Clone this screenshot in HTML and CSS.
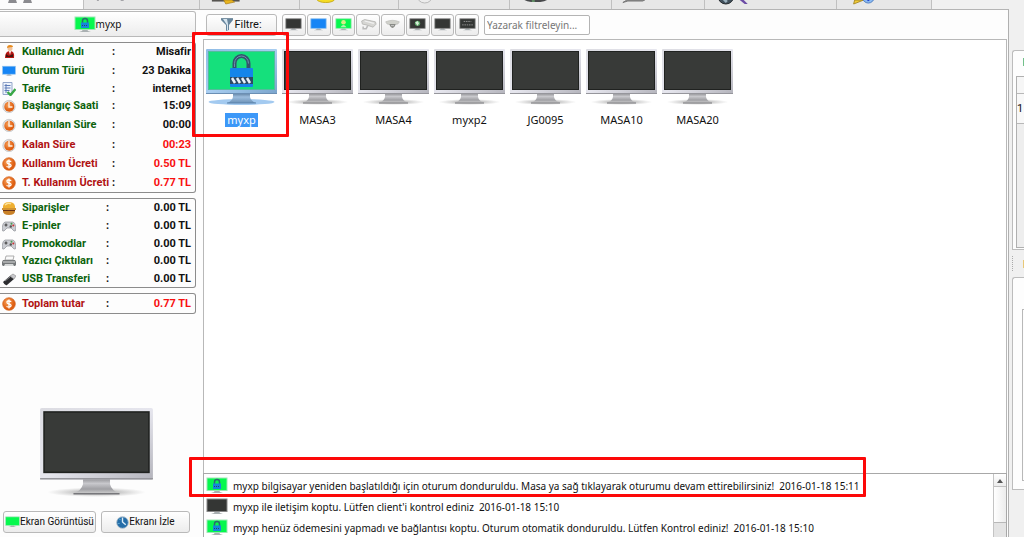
FILE: index.html
```html
<!DOCTYPE html>
<html lang="tr">
<head>
<meta charset="utf-8">
<title>Masalar</title>
<link rel="stylesheet" href="styles.css">
</head>
<body>
<svg class="defs" aria-hidden="true">
  <defs>
    <linearGradient id="frame" x1="0" y1="0" x2="1" y2="1"><stop offset="0" stop-color="#dcdce2"/><stop offset=".5" stop-color="#e6e6ee"/><stop offset="1" stop-color="#b4b4bc"/></linearGradient>
    <linearGradient id="frameSel" x1="0" y1="0" x2="1" y2="1"><stop offset="0" stop-color="#8fbce6"/><stop offset=".5" stop-color="#a8cdf0"/><stop offset="1" stop-color="#7aa4cc"/></linearGradient>
    <linearGradient id="stand" x1="0" y1="0" x2="0" y2="1"><stop offset="0" stop-color="#8c8c90"/><stop offset=".35" stop-color="#c8c8cc"/><stop offset=".7" stop-color="#a0a0a4"/><stop offset="1" stop-color="#d0d0d0"/></linearGradient>
    <linearGradient id="standSel" x1="0" y1="0" x2="0" y2="1"><stop offset="0" stop-color="#5c7d9e"/><stop offset=".4" stop-color="#9dbddd"/><stop offset="1" stop-color="#6c92b8"/></linearGradient>
    <radialGradient id="shade"><stop offset="0" stop-color="#777" stop-opacity=".8"/><stop offset="1" stop-color="#999" stop-opacity="0"/></radialGradient>
    <radialGradient id="orange" cx=".4" cy=".35"><stop offset="0" stop-color="#f9a45c"/><stop offset="1" stop-color="#df5f12"/></radialGradient>
    <symbol id="monitor" viewBox="0 0 71 56">
      <ellipse cx="35.500" cy="53" rx="31" ry="3" fill="url(#shade)"/>
      <path d="M27 44h17v4q1 4 6 6H21q5-2 6-6z" fill="url(#stand)"/>
      <path d="M21 54h29" stroke="#77777b"/>
      <rect width="71" height="45" rx="1" fill="url(#frame)"/>
      <path d="M0 44.500h71" stroke="#96969c"/>
      <rect x="2.500" y="2.500" width="66" height="38" fill="#383a38" stroke="#202220"/>
    </symbol>
    <symbol id="monitor-locked" viewBox="0 0 71 56">
      <ellipse cx="35.500" cy="53" rx="33" ry="3" fill="#a3caf0"/>
      <path d="M27 44h17v4q1 4 6 6H21q5-2 6-6z" fill="url(#standSel)"/>
      <path d="M21 54h29" stroke="#5a82ac"/>
      <rect width="71" height="45" rx="1" fill="url(#frameSel)"/>
      <path d="M0 44.500h71" stroke="#6b8fb4"/>
      <rect x="2.500" y="2.500" width="66" height="38" fill="#15e07c" stroke="#52bd9c"/>
      <path d="M28.500 20v-5.500a7 7.500 0 0 1 14 0V20" fill="none" stroke="#34536e" stroke-width="4"/>
      <path d="M28.500 18v-3.500a7 7.500 0 0 1 14 0" fill="none" stroke="#6d90ad"/>
      <rect x="24" y="19" width="23" height="19" rx="1" fill="#1485ea"/>
      <rect x="24" y="28" width="23" height="7" fill="#2c4a66"/>
      <path d="M26 29l3 5M31 29l3 5M36 29l3 5M41 29l3 5" stroke="#e8f0f8" stroke-width="2.500"/>
    </symbol>
    <symbol id="mini-foot" viewBox="0 0 22 17"><path d="M9 13h4l1 2 3 1H5l3-1z" fill="#aab0b2"/></symbol>
    <symbol id="mini-dark" viewBox="0 0 22 17"><use href="#mini-foot"/><rect x="1" y="1" width="20" height="12.500" fill="#343634" stroke="#888"/></symbol>
    <symbol id="mini-blue" viewBox="0 0 22 17"><use href="#mini-foot"/><rect x="1" y="1" width="20" height="12.500" fill="#1685f5" stroke="#8ec0ee"/></symbol>
    <symbol id="mini-green" viewBox="0 0 22 17"><use href="#mini-foot"/><rect x="1" y="1" width="20" height="12.500" fill="#06f84e" stroke="#9be8b4"/></symbol>
    <symbol id="mini-lock" viewBox="0 0 22 17"><use href="#mini-green"/><path d="M8.500 7V5a2.500 2.500 0 0 1 5 0v2" fill="none" stroke="#2c6a70" stroke-width="1.500"/><rect x="7" y="6.500" width="8" height="5.500" fill="#1685dd"/><path d="M8 9.500h6" stroke="#24496a" stroke-dasharray="1 1"/></symbol>
    <symbol id="mini-user" viewBox="0 0 22 17"><use href="#mini-green"/><circle cx="11" cy="5.500" r="3" fill="#d6ee86"/><path d="M7 12q4-6 8 0z" fill="#b8f0b0"/></symbol>
    <symbol id="mini-globe" viewBox="0 0 22 17"><use href="#mini-dark"/><circle cx="11" cy="7" r="3.500" fill="#5ca667"/><path d="M8 6l3-2 2 3-2 3z" fill="#d7efd9"/></symbol>
    <symbol id="mini-text" viewBox="0 0 22 17"><use href="#mini-dark"/><path d="M6 4.500h10M4 9h14" stroke="#aaa" stroke-dasharray="2 1"/></symbol>
    <symbol id="camera" viewBox="0 0 22 17"><path d="M2 4l4-2 14 3 1 3-4 4-9-3-5-1z" fill="#d6d6d3" stroke="#b0b0ae"/><path d="M6 4l12 3" stroke="#f2f2f2" stroke-width="1.500"/><path d="M10 10l-2 4H4v-3" fill="none" stroke="#bbb" stroke-width="2"/></symbol>
    <symbol id="dome" viewBox="0 0 22 17"><path d="M2 5q9-4 18 0l-2 3q-7 2-14 0z" fill="#d0d1cb" stroke="#b2b2ae" stroke-width=".7"/><path d="M7 8h8q-1 5-4 5t-4-5z" fill="#898b86"/><path d="M9 10h4" stroke="#ddd"/></symbol>
    <symbol id="funnel" viewBox="0 0 12 13"><path d="M0 0h12v2L8 7v5l-3 1V7L0 2z" fill="#67859c"/><path d="M2 1h4l1 5v6l-1 .5V7z" fill="#d6e5ef"/><path d="M0 .5h12" stroke="#7c93a4"/></symbol>
    <symbol id="person" viewBox="0 0 14 14"><circle cx="8" cy="3.500" r="2.500" fill="#f2c49c"/><path d="M5 3q0-3 3-3t3 2q-3 0-6 1z" fill="#e78b1c"/><path d="M3 13q0-7 5-7t4 7z" fill="#b61612"/><path d="M7 6h2l-1 4z" fill="#fff"/><path d="M4 9l3 2 4-2v3H4z" fill="#44150f"/></symbol>
    <symbol id="sheet" viewBox="0 0 14 14"><path d="M1 .5h9v12H1z" fill="#eef3fb" stroke="#92a5c9"/><path d="M2.500 3.500h6M2.500 6h6M2.500 8.500h5M4 2v9" stroke="#5f7db8"/><path d="M5.500 10l3 3 5-6" fill="none" stroke="#39a847" stroke-width="2.400"/></symbol>
    <symbol id="clock" viewBox="0 0 14 14"><circle cx="7" cy="7.500" r="6.200" fill="#e2e2e2" stroke="#bbb" stroke-width=".6"/><circle cx="7.300" cy="7.800" r="5" fill="url(#orange)"/><path d="M7 3v5h3.500" fill="none" stroke="#fff0e0" stroke-width="1.400"/></symbol>
    <symbol id="coin" viewBox="0 0 14 14"><circle cx="7" cy="7" r="6.300" fill="url(#orange)" stroke="#d2631f" stroke-width=".7"/><path d="M9.300 4.500Q4.500 3 5 5.500q0 1 2 1.500 2.500.7 2 2-.7 1.800-4.500.5M7 2.500v9" fill="none" stroke="#fff" stroke-width="1.300"/></symbol>
    <symbol id="burger" viewBox="0 0 14 14"><path d="M1 8q-1-7 6-7t6 7z" fill="#efb031"/><path d="M3 4q3-3 6-1" stroke="#fbe19a" fill="none" stroke-width="1.500"/><path d="M0 7h14v2H0z" fill="#d29332"/><path d="M1 9h12v1.500H1z" fill="#642f17"/><path d="M1 10h12q0 4-6 4t-6-4z" fill="#c98127"/></symbol>
    <symbol id="gamepad" viewBox="0 0 14 14"><path d="M3 3h8q2 0 3 6 0 4-2 3l-3-3H5l-3 3q-2 1-2-3 1-6 3-6z" fill="#cbcdd2" stroke="#8e9096" stroke-width=".7"/><path d="M2.500 6h3M4 4.500v3" stroke="#444" stroke-width="1.200"/><circle cx="9.500" cy="4.800" r="1" fill="#4b9c50"/><circle cx="11.300" cy="6.500" r="1" fill="#c33"/><circle cx="8.800" cy="7.500" r="1.200" fill="#555"/></symbol>
    <symbol id="printer" viewBox="0 0 14 14"><path d="M4 2h8l-1 4H3z" fill="#fafafa" stroke="#999" stroke-width=".8"/><path d="M1 6h12l1 2v3l-1 1H1l-1-1V8z" fill="#75787a"/><path d="M1 8h12" stroke="#dadada"/><path d="M3 10h8l1 2H2z" fill="#d8dada"/></symbol>
    <symbol id="usb" viewBox="0 0 14 14"><path d="M1 10l7-6 4 3-7 6q-2 1-4-3z" fill="#2c2d30"/><path d="M8 4l3-2 3 2-2 3z" fill="#c8c8cc" stroke="#888" stroke-width=".6"/><path d="M3 9l5-4" stroke="#88898c"/></symbol>
    <symbol id="watch" viewBox="0 0 14 14"><circle cx="7" cy="7" r="6.300" fill="#246da8" stroke="#b1c1cc"/><path d="M7 1.500v5l3.500 3" fill="none" stroke="#d9ecf8" stroke-width="1.500"/><path d="M3 3l2 1M2 8h2" stroke="#67afd8"/></symbol>
  </defs>
</svg>

<div class="app">
  <div class="main">
    <nav class="tabs" aria-label="Bölümler">
      <button class="tab active" aria-label="Masalar"><svg viewBox="0 0 83 9"><path d="M9 0h7l1 3H8zM24 0h7l1 3h-9z" fill="#8b8b8f"/></svg></button>
      <button class="tab" aria-label="Kafeterya"><svg viewBox="0 0 116 9"><path d="M13 0h2M37 0h3" stroke="#a4a4a8" stroke-width="2"/></svg></button>
      <button class="tab" aria-label="Üyeler"><svg viewBox="0 0 100 9"><path d="M12 0h28v1.500H12z" fill="#4f4d49"/><path d="M24 0h8l3 2-9 2z" fill="#e9b51e" stroke="#a87e19" stroke-width=".7"/></svg></button>
      <button class="tab" aria-label="Kasa"><svg viewBox="0 0 99 9"><ellipse cx="26" cy="-1" rx="9" ry="3.500" fill="#f5dc23" stroke="#c9ae1d"/></svg></button>
      <button class="tab" aria-label="Süre"><svg viewBox="0 0 111 9"><circle cx="26" cy="-5" r="8" fill="#ececec" stroke="#b8b8b8"/></svg></button>
      <button class="tab" aria-label="Tarifeler"><svg viewBox="0 0 102 9"><ellipse cx="26" cy="-1" rx="12" ry="3" fill="#47494b"/><path d="M22 1h3" stroke="#7cd080"/></svg></button>
      <button class="tab" aria-label="Raporlar"><svg viewBox="0 0 93 9"><path d="M11 2.500l4-2.500h18l-2 1H16z" fill="#999" stroke="#777"/></svg></button>
      <button class="tab" aria-label="Arama"><svg viewBox="0 0 132 9"><circle cx="21" cy="-4" r="8" fill="#41505c" stroke="#24292d"/><path d="M18 0l3-1 2 2-2 2z" fill="#9ab0bd"/><path d="M35 0h4l4 4h-3z" fill="#6b4ba5"/></svg></button>
      <button class="tab" aria-label="Ayarlar"><svg viewBox="0 0 96 9"><path d="M18 0h9l-10 4z" fill="#f3cc35" stroke="#a98c2a"/><circle cx="32" cy="-3" r="6" fill="#8abaf2" stroke="#517fc0"/><path d="M32-1v2" stroke="#2240d0" stroke-width="2"/></svg></button>
    </nav>

    <div class="work">
      <aside class="side">
        <button class="client"><svg class="mini"><use href="#mini-lock"/></svg>myxp</button>

        <div class="box"><table class="info session">
          <tr><td><svg><use href="#person"/></svg></td><th>Kullanıcı Adı</th><td>:</td><td>Misafir</td></tr>
          <tr><td><svg><use href="#mini-blue"/></svg></td><th>Oturum Türü</th><td>:</td><td>23 Dakika</td></tr>
          <tr><td><svg><use href="#sheet"/></svg></td><th>Tarife</th><td>:</td><td>internet</td></tr>
          <tr><td><svg><use href="#clock"/></svg></td><th>Başlangıç Saati</th><td>:</td><td>15:09</td></tr>
          <tr><td><svg><use href="#clock"/></svg></td><th>Kullanılan Süre</th><td>:</td><td>00:00</td></tr>
          <tr class="due"><td><svg><use href="#clock"/></svg></td><th>Kalan Süre</th><td>:</td><td>00:23</td></tr>
          <tr class="due"><td><svg><use href="#coin"/></svg></td><th>Kullanım Ücreti</th><td>:</td><td>0.50 TL</td></tr>
          <tr class="due"><td><svg><use href="#coin"/></svg></td><th>T. Kullanım Ücreti</th><td>:</td><td>0.77 TL</td></tr>
        </table></div>

        <div class="box"><table class="info extras">
          <tr><td><svg><use href="#burger"/></svg></td><th>Siparişler</th><td>:</td><td>0.00 TL</td></tr>
          <tr><td><svg><use href="#gamepad"/></svg></td><th>E-pinler</th><td>:</td><td>0.00 TL</td></tr>
          <tr><td><svg><use href="#gamepad"/></svg></td><th>Promokodlar</th><td>:</td><td>0.00 TL</td></tr>
          <tr><td><svg><use href="#printer"/></svg></td><th>Yazıcı Çıktıları</th><td>:</td><td>0.00 TL</td></tr>
          <tr><td><svg><use href="#usb"/></svg></td><th>USB Transferi</th><td>:</td><td>0.00 TL</td></tr>
        </table></div>

        <div class="box"><table class="info extras total">
          <tr class="due"><td><svg><use href="#coin"/></svg></td><th>Toplam tutar</th><td>:</td><td>0.77 TL</td></tr>
        </table></div>

        <svg class="preview"><use href="#monitor"/></svg>
        <div class="actions">
          <button><svg class="mini"><use href="#mini-green"/></svg>Ekran Görüntüsü</button>
          <button><svg class="round"><use href="#watch"/></svg>Ekranı İzle</button>
        </div>
      </aside>

      <main class="content">
        <div class="toolbar">
          <button class="filter"><svg><use href="#funnel"/></svg>Filtre:</button>
          <div class="states">
            <button aria-label="Kapalı"><svg><use href="#mini-dark"/></svg></button>
            <button aria-label="Açık"><svg><use href="#mini-blue"/></svg></button>
            <button aria-label="Üye"><svg><use href="#mini-user"/></svg></button>
            <button aria-label="Kamera"><svg><use href="#camera"/></svg></button>
            <button aria-label="Dome kamera"><svg><use href="#dome"/></svg></button>
            <button aria-label="İnternet"><svg><use href="#mini-globe"/></svg></button>
            <button aria-label="Boş"><svg><use href="#mini-dark"/></svg></button>
            <button aria-label="Mesaj"><svg><use href="#mini-text"/></svg></button>
          </div>
          <input type="text" aria-label="Filtre metni" placeholder="Yazarak filtreleyin...">
        </div>

        <div class="desks">
          <button class="desk selected"><svg><use href="#monitor-locked"/></svg><span>myxp</span></button>
          <button class="desk"><svg><use href="#monitor"/></svg><span>MASA3</span></button>
          <button class="desk"><svg><use href="#monitor"/></svg><span>MASA4</span></button>
          <button class="desk"><svg><use href="#monitor"/></svg><span>myxp2</span></button>
          <button class="desk"><svg><use href="#monitor"/></svg><span>JG0095</span></button>
          <button class="desk"><svg><use href="#monitor"/></svg><span>MASA10</span></button>
          <button class="desk"><svg><use href="#monitor"/></svg><span>MASA20</span></button>
        </div>

        <div class="log">
          <ul>
            <li><svg class="mini"><use href="#mini-lock"/></svg><span>myxp bilgisayar yeniden başlatıldığı için oturum donduruldu. Masa ya sağ tıklayarak oturumu devam ettirebilirsiniz!</span><time>2016-01-18 15:11</time></li>
            <li><svg class="mini"><use href="#mini-dark"/></svg><span>myxp ile iletişim koptu. Lütfen client'i kontrol ediniz</span><time class="near">2016-01-18 15:10</time></li>
            <li><svg class="mini"><use href="#mini-lock"/></svg><span>myxp henüz ödemesini yapmadı ve bağlantısı koptu. Oturum otomatik donduruldu. Lütfen Kontrol ediniz!</span><time>2016-01-18 15:10</time></li>
          </ul>
          <div class="scroll"><button aria-label="Yukarı"><svg viewBox="0 0 8 5"><path d="M1 5l3-4 3 4z" fill="#555"/></svg></button><div class="thumb"></div></div>
        </div>
      </main>
    </div>
  </div>

  <aside class="dock">
    <section class="panel list"><i class="mark green"></i><div class="rows"><div class="head"></div><div class="line">1</div></div></section>
    <div class="grip"><i class="dots"></i><i class="mark yellow"></i></div>
    <section class="panel detail"><div class="inner"></div></section>
  </aside>

  <div class="callout desk-callout"></div>
  <div class="callout log-callout"></div>
</div>
</body>
</html>
```
FILE: styles.css
```css
* { box-sizing: border-box; }
body { margin: 0; background: #f0f0f0; color: #111; font: 11px/14px Roboto, sans-serif; }
button, input { font: inherit; color: inherit; margin: 0; padding: 0; }
button { border: 1px solid #b9b9b9; border-radius: 3px; background: linear-gradient(#fff, #ececec); display: flex; align-items: center; justify-content: center; white-space: nowrap; }
svg { display: block; flex: none; }
.defs { position: absolute; width: 0; height: 0; }
.app { position: relative; display: flex; height: 100vh; overflow: hidden; }
.main { flex: 1; min-width: 0; display: flex; flex-direction: column; }

.tabs { display: grid; grid-template-columns: 83px 116px 100px 99px 111px 102px 93px 132px 96px; height: 9px; }
.tab { border: 0; border-left: 1px solid #c0c0c0; border-radius: 0; background: #e7e7e7; justify-content: flex-start; overflow: hidden; }
.tab svg { width: 100%; height: 9px; }
.tab.active { background: #fcfcfc; border-left: 0; }
.tab:last-child { border-right: 1px solid #c0c0c0; }

.work { flex: 1; min-height: 0; display: flex; gap: 7px; background: #fdfdfd; border-top: 1px solid #b4b4b4; border-right: 1px solid #b0b0b0; padding-right: 1px; }
.side { width: 196px; display: flex; flex-direction: column; padding: 1px 0 4px; }
.client { height: 26px; margin-bottom: 5px; border-left: 0; border-radius: 0 3px 3px 0; font-family: "Noto Sans", sans-serif; font-size: 10px; }
.mini { width: 22px; height: 17px; }
.box { border: 1px solid #8c8c8c; border-left: 0; border-radius: 0 3px 3px 0; margin-bottom: 5px; }
.info { width: 100%; border-collapse: collapse; table-layout: fixed; font-weight: bold; }
.info tr { height: 18px; }
.info td, .info th { padding: 0; text-align: left; white-space: nowrap; }
.info td:first-child { width: 22px; padding-left: 2px; }
.info td svg { width: 14px; height: 14px; }
.info th { width: 90px; color: #0b620b; }
.extras th { width: 84px; }
.info td:nth-child(3) { width: 6px; }
.info td:last-child { text-align: right; padding-right: 4px; }
.session tr:nth-child(2), .session tr:nth-child(6), .session tr:nth-child(7), .session tr:nth-child(8) { height: 19px; }
.session tr:nth-child(3) { height: 17px; }
.session tr:nth-child(5) { height: 20px; }
.extras tr:nth-child(3), .extras tr:nth-child(5) { height: 17px; }
.info.total tr { height: 19px; }
.due th { color: #b01212; }
.info .due td:last-child { color: #f81010; }
.preview { width: 113px; height: 89px; margin: auto 0 14px 40px; }
.actions { display: flex; gap: 5px; padding: 0 6px 0 3px; font: 10px/14px Roboto, sans-serif; }
.actions button { height: 22px; min-width: 0; flex: 89 1 0; }
.actions button:first-child { flex-grow: 93; }
.actions .mini { width: 15px; height: 12px; }
.round { width: 13px; height: 13px; }

.content { flex: 1; min-width: 0; display: flex; flex-direction: column; }
.toolbar { display: flex; align-items: center; height: 29px; padding: 0 3px; }
.filter { width: 71px; height: 22px; margin-right: 5px; gap: 1px; }
.filter svg { width: 12px; height: 13px; }
.states { display: flex; gap: 1px; width: 197px; margin-right: 5px; }
.states button { flex: 1; height: 22px; }
.states svg { width: 17px; height: 13px; }
.toolbar input { width: 106px; height: 20px; border: 1px solid #b4b4b4; border-radius: 2px; padding: 0 2px; background: #fff; font: 10px/14px "Noto Sans", sans-serif; }
.toolbar input::placeholder { color: #777; opacity: 1; }
.desks { flex: 1; min-height: 0; display: flex; flex-wrap: wrap; align-content: flex-start; gap: 5px; border: 1px solid #b8b8b8; border-bottom: 0; background: #fff; padding: 9px 2px; }
.desk { border: 0; background: none; flex-direction: column; gap: 8px; width: 71px; font-family: "Noto Sans", sans-serif; }
.desk svg { width: 71px; height: 56px; }
.desk span { padding: 0 2px; }
.selected span { background: #3c98f8; color: #fff; }

.log { display: flex; height: 64px; border: 1px solid #a8a8a8; border-bottom: 0; background: #fff; overflow: hidden; font: 10px/14px "Noto Sans", sans-serif; }
.log ul { flex: 1; margin: 0; padding: 1px 0 0 2px; list-style: none; }
.log li { display: flex; align-items: center; height: 21px; white-space: nowrap; }
.log span { margin-left: 5px; }
.log time { margin-left: 5px; }
.scroll { width: 13px; background: #e4e4e4; border-left: 1px solid #c4c4c4; }
.scroll button { width: 12px; height: 13px; border: 0; border-bottom: 1px solid #c0c0c0; border-radius: 0; }
.scroll svg { width: 8px; height: 5px; }
.thumb { height: 36px; background: linear-gradient(90deg, #fff, #ececec); border-bottom: 1px solid #b8b8b8; }

.dock { width: 15px; padding: 50px 0 0 3px; display: flex; flex-direction: column; overflow: hidden; }
.panel { border: 1px solid #bcbcbc; border-right: 0; border-radius: 3px 0 0 0; background: #fdfdfd; }
.list { height: 200px; padding-left: 3px; }
.mark { display: block; width: 1px; height: 8px; margin-left: auto; }
.green { background: #72c08a; margin-top: 7px; margin-bottom: 10px; }
.rows { height: 172px; border: 1px solid #b0b0b0; border-right: 0; background: #eee; }
.head { height: 17px; border-bottom: 1px solid #b8b8b8; background: #f6f6f6; }
.line { height: 30px; line-height: 29px; border-bottom: 1px solid #b8b8b8; background: #f8f8f8; }
.grip { height: 27px; display: flex; align-items: center; }
.dots { height: 15px; border-left: 1px dotted #aaa; }
.yellow { background: #e8c878; }
.detail { height: 213px; padding: 31px 0 0 9px; }
.inner { height: 172px; border: 1px solid #b8b8b8; border-right: 0; }

.callout { position: absolute; border: 3px solid #fc0808; border-radius: 1px; pointer-events: none; }
.desk-callout { left: 192px; top: 32px; width: 97px; height: 105px; }
.log-callout { left: 189px; top: 457px; width: 677px; height: 40px; }
```
